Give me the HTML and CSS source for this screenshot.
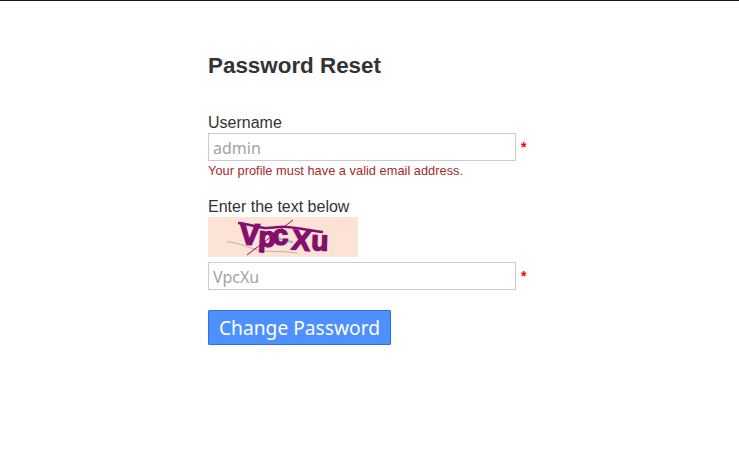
FILE: index.html
```html
<!DOCTYPE html>
<html lang="en">

<head>
  <meta charset="UTF-8">
  <title>Password Reset</title>
  <link rel="stylesheet" href="styles.css">
</head>

<body>
  <main class="content">
    <h1 class="title">Password Reset</h1>
    <form class="reset-form">
      <div class="field">
        <label class="field-label" for="username">Username</label>
        <div class="input-row">
          <input class="text-input" id="username" type="text" placeholder="admin">
          <span class="required">*</span>
        </div>
        <p class="field-error">Your profile must have a valid email address.</p>
      </div>
      <div class="field">
        <label class="field-label" for="captcha">Enter the text below</label>
        <svg class="captcha" width="150" height="40" viewBox="0 0 150 40">
          <rect width="150" height="40" fill="#fde3d6" />
          <path class="noise-grey" d="M19 25 C28 25 36 29 46 32 C58 36 70 33 89 36" />
          <path class="noise-blue" d="M55 16 C64 17 74 24 85 25" />
          <g class="captcha-text">
            <text transform="translate(31 27) rotate(3)">V</text>
            <text class="small" transform="translate(50 29) rotate(3)">p</text>
            <text class="small" transform="translate(65 28) rotate(-3)">c</text>
            <text class="small" transform="translate(83 32) rotate(6)">X</text>
            <text class="small" transform="translate(103 33) rotate(2)">u</text>
          </g>
          <path class="noise-thin" d="M39 38 L85 3" />
          <path class="noise-bar" d="M30 6 C42 7 50 11 59 11 C67 11 72 9 79 10 C92 11 104 14 115 15" />
        </svg>
        <div class="input-row captcha-row">
          <input class="text-input" id="captcha" type="text" placeholder="VpcXu">
          <span class="required">*</span>
        </div>
      </div>
      <button class="submit-btn" type="button">Change Password</button>
    </form>
  </main>
</body>

</html>
```

FILE: styles.css
```css
html,
body {
  margin: 0;
  padding: 0;
}

body {
  border-top: 1px solid #1a1a1a;
  background-color: #fff;
  color: #333;
  font-family: "Liberation Sans", Arial, sans-serif;
  font-size: 16px;
}

.content {
  width: 340px;
  margin-left: 208px;
  padding-top: 52px;
}

.title {
  margin: 0 0 35px;
  font-size: 22.4px;
  line-height: 26px;
  font-weight: bold;
}

.field {
  margin-bottom: 20px;
}

.field-label {
  display: block;
  margin-bottom: 1px;
  line-height: 18px;
}

.input-row {
  display: flex;
  align-items: center;
  gap: 5px;
}

.text-input {
  box-sizing: border-box;
  width: 308px;
  height: 28px;
  padding: 2px 4px 0;
  border: 1px solid #ccc;
  font-family: "Noto Sans", "Open Sans", sans-serif;
  font-size: 16px;
}

.text-input::placeholder {
  color: #a3a3a3;
  opacity: 1;
}

.required {
  color: #f00;
  font-size: 14px;
  font-weight: bold;
  line-height: 20px;
}

.field-error {
  margin: 3px 0 0;
  color: #a52a2a;
  font-size: 12.8px;
  line-height: 14px;
  letter-spacing: 0.02px;
}

.captcha {
  display: block;
}

.captcha-row {
  margin-top: 5px;
}

.captcha-text {
  fill: #84106e;
  stroke: #84106e;
  stroke-width: 1.5px;
  font-family: "Liberation Sans", sans-serif;
  font-size: 30px;
  font-weight: bold;
}

.captcha-text .small {
  font-size: 28px;
}

.noise-grey,
.noise-blue,
.noise-thin,
.noise-bar {
  fill: none;
}

.noise-grey {
  stroke: #b9b3ad;
  stroke-width: 1;
}

.noise-blue {
  stroke: #8db7cf;
  stroke-width: 2;
}

.noise-thin {
  stroke: #84106e;
  stroke-width: 1;
}

.noise-bar {
  stroke: #84106e;
  stroke-width: 2.5;
}

.submit-btn {
  display: block;
  box-sizing: border-box;
  width: 183px;
  height: 35px;
  padding: 0;
  border: 1px solid #2e72e0;
  border-radius: 1px;
  background-color: #4d90fe;
  color: #fff;
  font-family: "Noto Sans", "Open Sans", sans-serif;
  font-size: 19.2px;
}
```
